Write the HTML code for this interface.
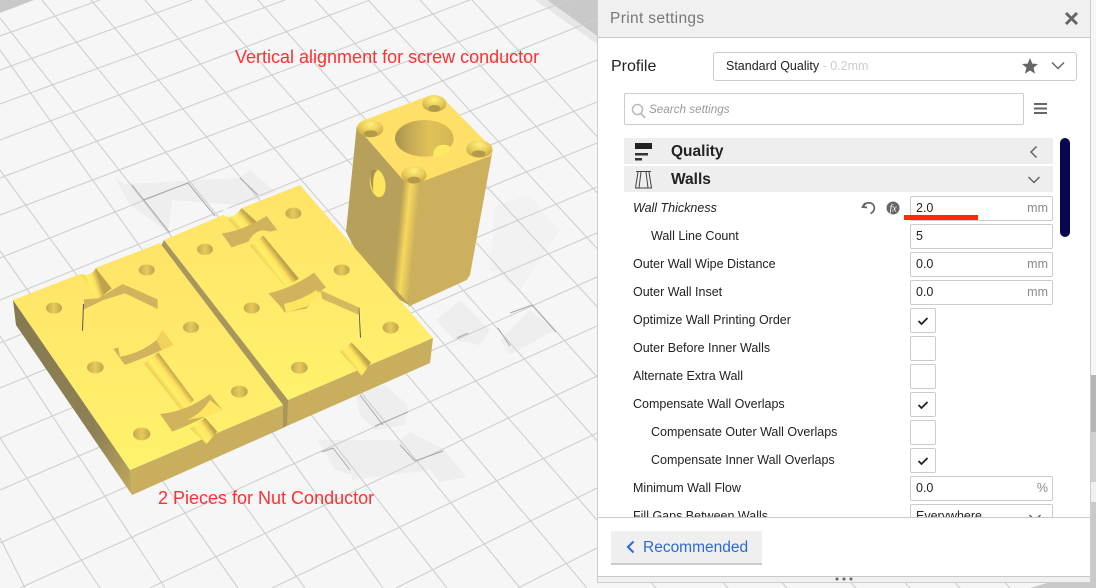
<!DOCTYPE html>
<html><head><meta charset="utf-8"><style>
html,body{margin:0;padding:0;background:#f6f6f6;width:1096px;height:588px;overflow:hidden}
#r{position:relative;width:1096px;height:588px;overflow:hidden;font-family:"Liberation Sans",sans-serif}
svg{position:absolute;left:0;top:0}
.a{position:absolute;white-space:nowrap}
#p{position:absolute;left:598px;top:0;width:492px;height:582px;background:#fff;box-shadow:0 0 0 1px #cdcdcd}
.l{position:absolute;left:35px;font-size:12.5px;color:#222;line-height:16px;white-space:nowrap}
.in{position:absolute;left:312px;width:141px;height:23.5px;border:1px solid #ccc;border-radius:2px;background:#fff;font-size:12.5px;color:#222;line-height:23px;box-sizing:content-box}
.in span{position:absolute;left:5px}
.in i{position:absolute;right:4px;font-style:normal;color:#8a8a8a}
.cb{position:absolute;left:312px;width:23.5px;height:23.5px;border:1px solid #ccc;border-radius:2px;background:#fff}
.ann{position:absolute;color:#ff3030;font-size:18px;white-space:nowrap;line-height:20px}
</style></head><body><div id="r">
<svg width="1096" height="588" viewBox="0 0 1096 588">
<defs>
<linearGradient id="hole" x1="0" x2="1" y1="0" y2="0"><stop offset="0" stop-color="#c4a94f"/><stop offset=".5" stop-color="#e8ca58"/><stop offset="1" stop-color="#bda450"/></linearGradient>
<linearGradient id="big" x1="0" x2="1" y1="0" y2="0"><stop offset="0" stop-color="#a8934f"/><stop offset=".3" stop-color="#c9ad55"/><stop offset=".6" stop-color="#e2c257"/><stop offset="1" stop-color="#d2b556"/></linearGradient>
<linearGradient id="top" x1="0" x2="0" y1="0" y2="1"><stop offset="0" stop-color="#ffe368"/><stop offset="1" stop-color="#fff26c"/></linearGradient>
<linearGradient id="lf" x1="0" x2="1" y1="0" y2="1"><stop offset="0" stop-color="#857950"/><stop offset=".7" stop-color="#8e8154"/><stop offset="1" stop-color="#c2aa5c"/></linearGradient>
<linearGradient id="ch"><stop offset="0" stop-color="#eccb52"/><stop offset=".35" stop-color="#fff06a"/><stop offset=".65" stop-color="#ffe35e"/><stop offset="1" stop-color="#bfa24d"/></linearGradient>
<linearGradient id="c1" href="#ch" gradientUnits="userSpaceOnUse" x1="205" y1="118" x2="245" y2="85"/>
<linearGradient id="c2" href="#ch" gradientUnits="userSpaceOnUse" x1="270" y1="197" x2="310" y2="167"/>
<linearGradient id="c3" href="#ch" gradientUnits="userSpaceOnUse" x1="540" y1="515" x2="575" y2="488"/>
<linearGradient id="c4" href="#ch" gradientUnits="userSpaceOnUse" x1="212" y1="100" x2="258" y2="85"/>
<linearGradient id="c5" href="#ch" gradientUnits="userSpaceOnUse" x1="402" y1="370" x2="445" y2="337"/>
<linearGradient id="c6" href="#ch" gradientUnits="userSpaceOnUse" x1="540" y1="565" x2="585" y2="533"/>
<linearGradient id="cor" gradientUnits="userSpaceOnUse" x1="190" y1="285" x2="240" y2="290"><stop offset="0" stop-color="#b9a258"/><stop offset=".45" stop-color="#f7d85c"/><stop offset="1" stop-color="#ceb25e"/></linearGradient>
<radialGradient id="cs" cx=".5" cy=".25" r=".7"><stop offset="0" stop-color="#fff27a"/><stop offset=".6" stop-color="#e8c957"/><stop offset="1" stop-color="#c4a950"/></radialGradient>
</defs>
<rect width="1096" height="588" fill="#f6f6f6"/>
<!-- gray corners -->
<polygon points="0,0 34,0 0,13" fill="#c9c9c9"/>
<polygon points="547,0 600,0 600,38" fill="#c9c9c9"/>
<polygon points="535,0 547,0 600,38 600,46" fill="#e6e6e6"/>
<!-- build-plate patches -->
<g fill="#eeeeee">
<polygon points="115,178 125,184 240,178 250,170 276,192 240,205 172,200 168,232 130,205"/>
<polygon points="355,392 385,385 408,405 405,425 375,430 360,415"/>
<polygon points="318,440 400,440 410,432 445,450 466,477 440,482 430,470 352,480 352,475 335,470"/>
<polygon points="436,320 460,300 490,330 480,345 455,340"/>
<polygon points="500,340 530,310 555,330 510,355"/>
</g>
<polygon points="495,205 530,195 545,215 560,230 540,260 520,290 490,270" fill="#f2f2f2"/>
<!-- grid -->
<g stroke="#cfcfcf" stroke-width="1.1" fill="none">
<path d="M0 36L100 0M0 70L192 0M0 104L285 0M0 140L370 0M0 178L470 0M0 215L569 0M0 258L597 19M0 300L597 60M0 343L597 102M0 388L597 143M0 438L597 187M0 490L597 233M0 543L597 277M20 588L597 326M150 588L597 376M272 588L597 433M396 588L597 488M518 588L597 548"/>
<path d="M0 538L25 588M0 438L100 588M0 336L165 588M0 251L238 588M0 170L305 588M0 50L383 588M0 18L447 588M42 0L520 588M91 0L587 588M145 0L656 588M205 0L728 588M258 0L787 588M315 0L856 588M368 0L910 588M420 0L960 588M472 0L1010 588"/>
</g>
<g stroke="#a8a8a8" stroke-width="1" fill="none">
<path d="M132 185L170 233M143 200L188 183M188 183L215 216M240 178L258 195M360 395L383 425M375 426L408 412M322 452L333 448M333 448L350 470M400 445L415 461M415 461L443 451M457 338L468 333M510 313L532 305M498 328L510 346M532 305L556 332"/>
</g>
<!-- bottom-right wall -->
<rect x="1090" y="375" width="6" height="57" fill="#b5b5b5"/>
<rect x="1090" y="432" width="6" height="50" fill="#cfcfcf"/>
<rect x="1090" y="482" width="6" height="20" fill="#f0f0f0"/>
<rect x="1090" y="502" width="6" height="86" fill="#c9c9c9"/>
<polygon points="1030,588 1050,582 1096,582 1096,588" fill="#c9c9c9"/>
<!-- column -->
<g transform="translate(340 85) scale(.33333)">
<polygon points="50,125 190,285 215,665 100,600 18,440" fill="#b7a059"/>
<polygon points="228,295 458,195 390,570 380,585 205,665" fill="#ccb05e"/>
<polygon points="190,285 240,292 205,655 155,600" fill="url(#cor)"/>
<path d="M50 125Q52 115 65 108L268 32Q290 25 310 40L452 185Q462 200 450 213L240 292Q210 302 190 285Z" fill="#fee069"/>
<ellipse cx="253" cy="160" rx="88" ry="55" fill="url(#big)"/>
<path d="M280 200Q290 175 320 180Q340 188 330 198Q305 220 280 215Z" fill="#ffe864"/>
<g fill="url(#cs)"><ellipse cx="91" cy="131" rx="39" ry="26"/><ellipse cx="283" cy="56" rx="36" ry="25"/><ellipse cx="418" cy="192" rx="39" ry="26"/><ellipse cx="222" cy="270" rx="38" ry="26"/></g>
<g fill="#b39a48"><ellipse cx="92" cy="146" rx="20" ry="10"/><ellipse cx="283" cy="70" rx="18" ry="10"/><ellipse cx="416" cy="206" rx="20" ry="10"/><ellipse cx="222" cy="285" rx="19" ry="10"/></g>
<ellipse cx="113" cy="295" rx="23" ry="42" transform="rotate(-10 113 295)" fill="#ffe45f"/>
<path d="M92 262Q100 250 112 256Q96 265 100 320Q88 290 92 262Z" fill="#a2914f"/>
</g>
<!-- right plate -->
<polygon points="164,240 288,400 288,425 283,428 283,405 161,246" fill="#a8965a"/>
<polygon points="288,400 433,338 430,363 287,426" fill="#c9ae5e"/>
<polygon points="164,240 223,215 242,208 300,185 433,338 288,400" fill="url(#top)"/>
<g transform="translate(160 180) scale(.33333)">
<polygon points="205,118 245,85 290,125 240,158" fill="url(#c1)"/>
<path d="M190 105Q215 122 240 90L245 85L190 85Z" fill="#f6f6f6"/>
<polygon points="270,197 310,167 417,296 377,322" fill="url(#c2)"/>
<path d="M185 160Q240 155 320 108L352 150L330 155Q290 140 265 185L215 202Z" fill="#d0b35c"/>
<path d="M325 340Q395 325 462 278L498 322L470 340L440 385L375 398L360 378Z" fill="#d0b35c"/>
<path d="M372 372Q425 360 470 330L480 345L440 380L378 398Z" fill="#ffe560"/>
<polygon points="480,330 598,383 598,405 487,357" fill="#d6b95f"/>
<polygon points="598,383 603,473 600,473 596,385" fill="#555"/>
<polygon points="540,515 575,488 633,548 605,588" fill="url(#c3)"/>
<g fill="url(#hole)"><ellipse cx="400" cy="100" rx="24" ry="17"/><ellipse cx="135" cy="208" rx="24" ry="17"/><ellipse cx="545" cy="270" rx="24" ry="17"/><ellipse cx="275" cy="384" rx="24" ry="17"/><ellipse cx="692" cy="443" rx="24" ry="18"/><ellipse cx="418" cy="563" rx="25" ry="18"/></g>
</g>
<!-- left plate -->
<polygon points="13,300 130,470 132,495 16,325" fill="url(#lf)"/>
<polygon points="130,470 283,405 283,428 132,495" fill="#c9ae5e"/>
<polygon points="13,300 160,243 283,405 130,470" fill="url(#top)"/>
<g transform="translate(10 240) scale(.33333)">
<polygon points="212,100 258,85 305,145 265,178" fill="url(#c4)"/>
<path d="M210 100Q235 115 258 85L210 85Z" fill="#f6f6f6"/>
<polygon points="222,178 265,175 338,132 443,178 443,207 345,160 280,180 222,208" fill="#d0b35c"/>
<polygon points="219,192 222,192 219,272 216,272" fill="#555"/>
<polygon points="402,370 445,337 552,480 517,515" fill="url(#c5)"/>
<path d="M310 327L325 322L330 350Q390 340 440 300L457 270L490 315L445 335Q400 355 345 375Z" fill="#d0b35c"/>
<path d="M440 300L457 270L490 315L455 330Z" fill="#f2d25a"/>
<path d="M450 522Q530 515 600 462L637 510L585 530Q540 555 487 575Z" fill="#d0b35c"/>
<path d="M530 540Q570 525 600 480L637 510L585 530Z" fill="#ffe560"/>
<polygon points="540,565 585,533 622,575 590,612" fill="url(#c6)"/>
<g fill="url(#hole)"><ellipse cx="410" cy="90" rx="24" ry="17"/><ellipse cx="132" cy="204" rx="24" ry="17"/><ellipse cx="543" cy="262" rx="24" ry="17"/><ellipse cx="256" cy="382" rx="25" ry="18"/><ellipse cx="688" cy="455" rx="25" ry="18"/><ellipse cx="395" cy="582" rx="26" ry="19"/></g>
</g>
</svg>
<div class="ann" style="left:235px;top:47px">Vertical alignment for screw conductor</div>
<div class="ann" style="left:158px;top:488px">2 Pieces for Nut Conductor</div>

<div id="p">
<div class="a" style="left:0;top:0;width:492px;height:37px;background:#f0f0f0;border-bottom:1px solid #c8c8c8"></div>
<div class="a" style="left:12px;top:10px;font-size:15.5px;letter-spacing:.35px;color:#777;line-height:18px">Print settings</div>
<svg style="left:466px;top:11px" width="15" height="15"><path d="M2 2L13 13M13 2L2 13" stroke="#666" stroke-width="3"/></svg>

<div class="a" style="left:13px;top:57px;font-size:16px;color:#222;line-height:19px">Profile</div>
<div class="a" style="left:115px;top:52px;width:362px;height:27px;border:1px solid #ccc;border-radius:3px;background:#fff"></div>
<div class="a" style="left:128px;top:58px;font-size:12.5px;color:#222;line-height:16px">Standard Quality<span style="color:#ccc"> - 0.2mm</span></div>
<svg style="left:423px;top:57px" width="18" height="18"><polygon points="9,1 11.3,6.6 17,7 12.6,10.8 14,16.6 9,13.5 4,16.6 5.4,10.8 1,7 6.7,6.6" fill="#666"/></svg>
<svg style="left:452px;top:60px" width="16" height="12"><path d="M2 2.5L8 8.5L14 2.5" fill="none" stroke="#666" stroke-width="1.5"/></svg>

<div class="a" style="left:26px;top:93px;width:398px;height:30px;border:1px solid #ccc;border-radius:2px;background:#fff"></div>
<svg style="left:32px;top:103px" width="18" height="18"><circle cx="7.5" cy="6.5" r="5" fill="none" stroke="#bbb" stroke-width="1.5"/><path d="M11 10.5L15 15" stroke="#bbb" stroke-width="1.8"/></svg>
<div class="a" style="left:51px;top:102px;font-size:11.7px;font-style:italic;color:#999;line-height:16px">Search settings</div>
<svg style="left:436px;top:102px" width="14" height="14"><path d="M0 2h13M0 6.500h13M0 11h13" stroke="#666" stroke-width="2"/></svg>

<div class="a" style="left:26px;top:138px;width:429px;height:26px;background:#eee"></div>
<div class="a" style="left:26px;top:166px;width:429px;height:26px;background:#eee"></div>
<div class="a" style="left:462px;top:138px;width:10px;height:98.500px;background:#07074f;border-radius:5px"></div>
<svg style="left:37px;top:143px" width="18" height="18"><rect width="17" height="6" fill="#222"/><rect y="10" width="13" height="2.500" fill="#333"/><rect y="15" width="7" height="2.500" fill="#333"/></svg>
<svg style="left:37px;top:170px" width="18" height="19"><path d="M1 1.500H16M0 18H17M3 2L0.500 18M6 2L4 18M11 2L13 18M14 2L16.500 18" fill="none" stroke="#444" stroke-width="1"/></svg>
<div class="a" style="left:73px;top:142px;font-size:15.5px;font-weight:bold;color:#222;line-height:19px">Quality</div>
<div class="a" style="left:73px;top:170px;font-size:15.5px;font-weight:bold;color:#222;line-height:19px">Walls</div>
<svg style="left:430px;top:145px" width="12" height="14"><path d="M8.500 1.500L3 7L8.500 12.500" fill="none" stroke="#666" stroke-width="1.500"/></svg>
<svg style="left:429px;top:174px" width="14" height="12"><path d="M1.500 3L7 8.500L12.500 3" fill="none" stroke="#666" stroke-width="1.500"/></svg>

<div class="a" style="left:0;top:0;width:492px;height:517px;overflow:hidden">
<div class="l" style="top:200px;font-style:italic">Wall Thickness</div>
<svg style="left:263px;top:200px" width="16" height="16"><path d="M4 3L1.500 7L6 7.500M2.500 6.500C4 2.500 9 1.500 12 4.500C14.500 7.500 13.500 11.500 9.500 13.500" fill="none" stroke="#666" stroke-width="1.700"/></svg>
<svg style="left:288px;top:201px" width="14" height="14"><circle cx="7" cy="7" r="6.500" fill="#666"/><text x="3.500" y="10.500" font-family="Liberation Serif" font-style="italic" font-size="10" fill="#fff">fx</text></svg>
<div class="in" style="top:195.500px"><span>2.0</span><i>mm</i></div>
<div class="l" style="top:228px;left:53px">Wall Line Count</div>
<div class="in" style="top:223.500px"><span>5</span></div>
<div class="l" style="top:256px">Outer Wall Wipe Distance</div>
<div class="in" style="top:251.500px"><span>0.0</span><i>mm</i></div>
<div class="l" style="top:284px">Outer Wall Inset</div>
<div class="in" style="top:279.500px"><span>0.0</span><i>mm</i></div>
<div class="l" style="top:312px">Optimize Wall Printing Order</div>
<div class="cb" style="top:307.500px"><svg width="24" height="24" style="left:0;top:0"><path d="M7.500 12L10.500 15L16.500 9" fill="none" stroke="#222" stroke-width="1.800"/></svg></div>
<div class="l" style="top:340px">Outer Before Inner Walls</div>
<div class="cb" style="top:335.500px"></div>
<div class="l" style="top:368px">Alternate Extra Wall</div>
<div class="cb" style="top:363.500px"></div>
<div class="l" style="top:396px">Compensate Wall Overlaps</div>
<div class="cb" style="top:391.500px"><svg width="24" height="24" style="left:0;top:0"><path d="M7.500 12L10.500 15L16.500 9" fill="none" stroke="#222" stroke-width="1.800"/></svg></div>
<div class="l" style="top:424px;left:53px">Compensate Outer Wall Overlaps</div>
<div class="cb" style="top:419.500px"></div>
<div class="l" style="top:452px;left:53px">Compensate Inner Wall Overlaps</div>
<div class="cb" style="top:447.500px"><svg width="24" height="24" style="left:0;top:0"><path d="M7.500 12L10.500 15L16.500 9" fill="none" stroke="#222" stroke-width="1.800"/></svg></div>
<div class="l" style="top:480px">Minimum Wall Flow</div>
<div class="in" style="top:475.500px"><span>0.0</span><i>%</i></div>
<div class="l" style="top:508px">Fill Gaps Between Walls</div>
<div class="in" style="top:503.500px"><span>Everywhere</span><svg width="14" height="10" style="left:117px;top:8px"><path d="M1.500 2L7 7.500L12.500 2" fill="none" stroke="#666" stroke-width="1.500"/></svg></div>
</div>
<div class="a" style="left:306px;top:215px;width:74px;height:5px;background:#ff2a00"></div>

<div class="a" style="left:0;top:517px;width:492px;height:1px;background:#c8c8c8"></div>
<div class="a" style="left:13px;top:531px;width:151px;height:32px;background:#efefef;border-bottom:2px solid #ccc"></div>
<svg style="left:27px;top:540px" width="12" height="14"><path d="M8.500 1.500L3 7L8.500 12.500" fill="none" stroke="#2a6bd8" stroke-width="2"/></svg>
<div class="a" style="left:45px;top:538px;font-size:15.500px;color:#2a6bd8;line-height:19px">Recommended</div>
<div class="a" style="left:0;top:576px;width:492px;height:6px;background:#f0f0f0;border-top:1px solid #c8c8c8;box-sizing:border-box"></div>
<svg style="left:236px;top:576px" width="24" height="6"><circle cx="3" cy="3" r="1.500" fill="#666"/><circle cx="10" cy="3" r="1.500" fill="#666"/><circle cx="17" cy="3" r="1.500" fill="#666"/></svg>
</div>
</div></body></html>
